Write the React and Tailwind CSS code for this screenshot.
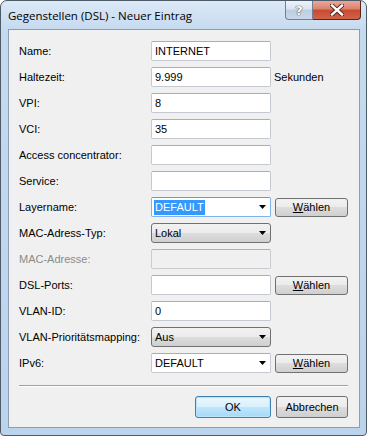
import React from 'react';

// Windows 7 style dialog: "Gegenstellen (DSL) - Neuer Eintrag"

const inputBox = "w-[120px] h-[20px] flex items-center pl-[3px] rounded-[2px] border border-[#c5c9d1] border-t-[#abadb3] bg-white";
const comboBox = "w-[120px] h-[20px] flex items-center pl-[3px] pr-[4px] rounded-[3px] border border-[#707070] bg-[linear-gradient(to_bottom,#f2f2f2_0%,#ebebeb_50%,#dddddd_50%,#cfcfcf_100%)]";
const pushButton = "h-[19px] flex items-center justify-center rounded-[3px] border border-[#707070] bg-[linear-gradient(to_bottom,#f2f2f2_0%,#ebebeb_50%,#dddddd_50%,#cfcfcf_100%)]";

function Arrow() {
    return (
        <svg width="7" height="4" viewBox="0 0 7 4" className="ml-auto">
            <polygon points="0,0 7,0 3.5,4" fill="#000" />
        </svg>
    );
}

function Waehlen() {
    return (
        <button className={pushButton + " ml-[4px] w-[73px]"}>
            <span><span className="underline">W</span>ählen</span>
        </button>
    );
}

function Row({ label, children, extra, disabled }) {
    return (
        <div className="flex items-center h-[20px]">
            <span className={"w-[132px] " + (disabled ? "text-[#8b8b8b]" : "")}>{label}</span>
            {children}
            {extra}
        </div>
    );
}

export default function App() {
    return (
        <div className="w-[367px] h-[436px] bg-white text-black font-['Liberation_Sans',Arial,sans-serif] text-[11px]">
            <div className="w-[367px] h-[436px] flex flex-col rounded-t-[7px] rounded-b-[4px] border border-[#4d5a68] bg-[linear-gradient(to_bottom,#dce9f7_0px,#c6daef_28px,#bcd3ec_100%)]">
                {/* Title bar */}
                <div className="h-[28px] flex items-start pl-[7px] pr-[5px]">
                    <span className="mt-[7px] leading-[15px] text-[11.5px] font-['Open_Sans',sans-serif] text-black">
                        Gegenstellen (DSL) - Neuer Eintrag
                    </span>
                    <div className="ml-auto flex">
                        <div className="w-[28px] h-[19px] flex items-center justify-center rounded-bl-[4px] border border-t-0 border-[#6f8096] bg-[linear-gradient(to_bottom,#eef3f9_0%,#d9e4f0_45%,#bccde0_50%,#c9d9ea_100%)]">
                            <span className="font-['DejaVu_Sans',sans-serif] font-bold text-[13px] leading-none text-white [text-shadow:0_0_1px_#333,0_0_1px_#333]">?</span>
                        </div>
                        <div className="w-[48px] h-[19px] flex items-center justify-center rounded-br-[4px] border border-l-0 border-t-0 border-[#5c2218] bg-[linear-gradient(to_bottom,#e9a99a_0%,#dc806b_45%,#c84a31_50%,#d0634a_100%)]">
                            <svg width="14" height="12" viewBox="0 0 14 12">
                                <path d="M2 1.5 L12 10.5 M12 1.5 L2 10.5" stroke="#4a1a12" strokeWidth="4.2" strokeLinecap="square" />
                                <path d="M2 1.5 L12 10.5 M12 1.5 L2 10.5" stroke="#fff" strokeWidth="2.4" strokeLinecap="square" />
                            </svg>
                        </div>
                    </div>
                </div>

                {/* Client area */}
                <div className="ml-[7px] mr-[6px] mb-[7px] h-[399px] border border-[#8a9db3] bg-[#f0f0f0] flex flex-col pt-[11px] pl-[10px] pr-[11px]">
                    <div className="flex flex-col gap-[6px]">
                        <Row label="Name:"><div className={inputBox}>INTERNET</div></Row>
                        <Row label="Haltezeit:" extra={<span className="ml-[3px]">Sekunden</span>}>
                            <div className={inputBox}>9.999</div>
                        </Row>
                        <Row label="VPI:"><div className={inputBox}>8</div></Row>
                        <Row label="VCI:"><div className={inputBox}>35</div></Row>
                        <Row label="Access concentrator:"><div className={inputBox}></div></Row>
                        <Row label="Service:"><div className={inputBox}></div></Row>
                        <Row label="Layername:" extra={<Waehlen />}>
                            <div className="w-[120px] h-[20px] flex items-center pl-[2px] pr-[4px] rounded-[2px] border border-[#7eb4ea] border-t-[#569de5] bg-white">
                                <span className="bg-[#3399ff] text-white px-[1px] leading-[15px]">DEFAULT</span>
                                <Arrow />
                            </div>
                        </Row>
                        <Row label="MAC-Adress-Typ:">
                            <div className={comboBox}>Lokal<Arrow /></div>
                        </Row>
                        <Row label="MAC-Adresse:" disabled>
                            <div className="w-[120px] h-[20px] rounded-[2px] border border-[#c9ccd1] border-t-[#adb2b5] bg-[#f0f0f0]"></div>
                        </Row>
                        <Row label="DSL-Ports:" extra={<Waehlen />}>
                            <div className={inputBox}></div>
                        </Row>
                        <Row label="VLAN-ID:"><div className={inputBox}>0</div></Row>
                        <Row label="VLAN-Prioritätsmapping:">
                            <div className={comboBox}>Aus<Arrow /></div>
                        </Row>
                        <Row label="IPv6:" extra={<Waehlen />}>
                            <div className={inputBox + " pr-[4px]"}>DEFAULT<Arrow /></div>
                        </Row>
                    </div>

                    {/* Etched separator */}
                    <div className="mt-[12px] h-[2px] border-t border-[#a0a0a0] border-b border-b-white"></div>

                    {/* Dialog buttons */}
                    <div className="mt-[9px] flex justify-end gap-[5px]">
                        <button className="w-[76px] h-[22px] flex items-center justify-center rounded-[3px] border border-[#3c7fb1] bg-[linear-gradient(to_bottom,#eaf6fd_0%,#d9f0fc_50%,#bee6fd_50%,#a7d9f5_100%)] shadow-[inset_0_0_0_1px_#b9e4fb]">
                            OK
                        </button>
                        <button className={pushButton + " w-[72px] h-[22px]"}>Abbrechen</button>
                    </div>
                </div>
            </div>
        </div>
    );
}
